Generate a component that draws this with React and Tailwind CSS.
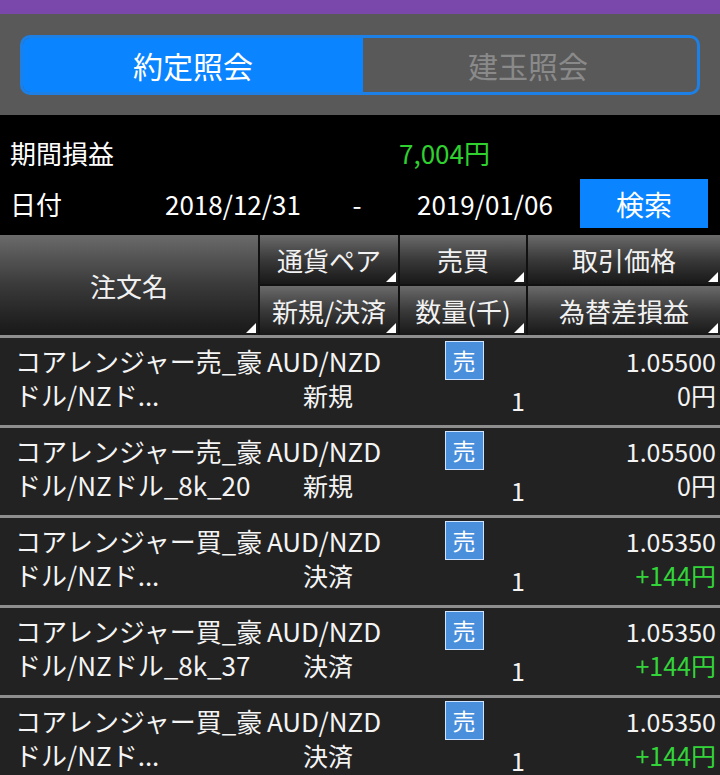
import React from 'react';

const FONT = { fontFamily: '"Noto Sans CJK JP", "Noto Sans", sans-serif' };

const ROWS = [
  { name1: 'コアレンジャー売_豪', name2: 'ドル/NZド...', pair: 'AUD/NZD', kind: '新規', side: '売', qty: '1', price: '1.05500', pl: '0円', plus: false },
  { name1: 'コアレンジャー売_豪', name2: 'ドル/NZドル_8k_20', pair: 'AUD/NZD', kind: '新規', side: '売', qty: '1', price: '1.05500', pl: '0円', plus: false },
  { name1: 'コアレンジャー買_豪', name2: 'ドル/NZド...', pair: 'AUD/NZD', kind: '決済', side: '売', qty: '1', price: '1.05350', pl: '+144円', plus: true },
  { name1: 'コアレンジャー買_豪', name2: 'ドル/NZドル_8k_37', pair: 'AUD/NZD', kind: '決済', side: '売', qty: '1', price: '1.05350', pl: '+144円', plus: true },
  { name1: 'コアレンジャー買_豪', name2: 'ドル/NZド...', pair: 'AUD/NZD', kind: '決済', side: '売', qty: '1', price: '1.05350', pl: '+144円', plus: true },
];

// little white corner marker on the sortable header cells
const Corner = () => (
  <span className="absolute right-[2px] bottom-[2px] w-0 h-0 border-b-[10px] border-l-[10px] border-b-white border-l-transparent" />
);

const HeadCell = ({ children, className = '' }) => (
  <div
    className={`relative flex items-center justify-center bg-linear-to-b from-[#6b6b6b] via-[#3a3a3a] to-[#181818] text-[26px] text-[#f2f2f2] ${className}`}
  >
    {children}
    <Corner />
  </div>
);

const Row = ({ row }) => (
  <div className="border-t-[3px] border-[#8e8e8e] h-[90px] flex text-[25px] leading-[34px] text-[#f4f4f4]">
    <div className="w-[260px] pl-[15px] pt-[6px] whitespace-nowrap text-[26px]">
      <div>{row.name1}</div>
      <div>{row.name2}</div>
    </div>
    <div className="w-[140px] pt-[6px] whitespace-nowrap">
      <div className="pl-[7px] text-[26px]">{row.pair}</div>
      <div className="text-center pr-[4px]">{row.kind}</div>
    </div>
    <div className="w-[128px] pt-[3px] flex flex-col items-center">
      <div className="w-[39px] h-[39px] bg-[#4a8fdb] border border-[#cfe3ff] flex items-center justify-center text-[23px] leading-none text-white">
        {row.side}
      </div>
      <div className="self-end pr-[3px] leading-[40px]">{row.qty}</div>
    </div>
    <div className="flex-1 pt-[6px] pr-[4px] text-right whitespace-nowrap">
      <div>{row.price}</div>
      <div className={row.plus ? 'text-[#33d43a]' : ''}>{row.pl}</div>
    </div>
  </div>
);

export default function App() {
  return (
    <div className="w-[720px] h-[775px] overflow-hidden bg-[#222222]" style={FONT}>
      <div className="h-[14px] bg-[#7a47ab]" />

      <div className="h-[101px] bg-[#595959] pl-[20px] pt-[21px]">
        <div className="w-[680px] h-[60px] flex rounded-[10px] border-[3px] border-[#1c80e6] overflow-hidden">
          <div className="w-[340px] bg-[#0a84ff] flex items-center justify-center text-[30px] text-white">約定照会</div>
          <div className="flex-1 flex items-center justify-center text-[30px] text-[#8a8a8a] pr-[4px]">建玉照会</div>
        </div>
      </div>

      <div className="h-[120px] bg-black text-[26px] text-white">
        <div className="h-[64px] pt-[10px] flex items-center">
          <div className="w-[399px] pl-[10px]">期間損益</div>
          <div className="text-[#2fd12f]">7,004円</div>
        </div>
        <div className="h-[49px] flex items-center">
          <div className="w-[165px] pl-[10px]">日付</div>
          <div className="w-[186px]">2018/12/31</div>
          <div className="w-[12px] text-center">-</div>
          <div className="w-[54px]" />
          <div className="w-[163px]">2019/01/06</div>
          <div className="w-[128px] h-[49px] bg-[#0a84ff] flex items-center justify-center text-[28px]">検索</div>
        </div>
      </div>

      <div className="h-[100px] flex gap-[2px] bg-[#111111]">
        <HeadCell className="w-[258px]">注文名</HeadCell>
        <div className="flex-1 grid grid-cols-[138px_126px_1fr] grid-rows-2 gap-[2px]">
          <HeadCell>通貨ペア</HeadCell>
          <HeadCell>売買</HeadCell>
          <HeadCell>取引価格</HeadCell>
          <HeadCell>新規/決済</HeadCell>
          <HeadCell>数量(千)</HeadCell>
          <HeadCell>為替差損益</HeadCell>
        </div>
      </div>

      <div>
        {ROWS.map((row, i) => (
          <Row key={i} row={row} />
        ))}
      </div>
    </div>
  );
}
